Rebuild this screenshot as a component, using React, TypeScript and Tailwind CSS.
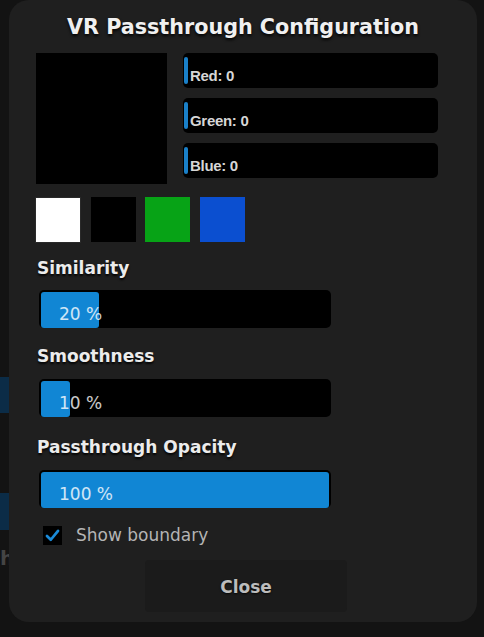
import React from "react";

function ColorBar({ label }: { label: string }) {
  return (
    <div className="flex items-center h-[35px] w-[255px] rounded-[5px] bg-black">
      <div className="ml-[1px] w-[4px] h-[27px] rounded-full bg-[#1a80c8]" />
      <span className="ml-[2px] mt-[10px] font-['Liberation_Sans',sans-serif] font-bold text-[15px] leading-[16px] tracking-[-0.3px] text-[#d6d6d6] [text-shadow:0_1px_1px_rgba(0,0,0,0.8)]">
        {label}
      </span>
    </div>
  );
}

function Slider({ pct, text }: { pct: number; text: string }) {
  return (
    <div className="ml-[30px] w-[292px] h-[38px] rounded-[5px] bg-black p-[2px] grid">
      <div className="col-start-1 row-start-1 h-full">
        <div className="h-full rounded-[3px] bg-[#1186d4]" style={{ width: `${pct}%` }} />
      </div>
      <div className="col-start-1 row-start-1 flex items-center pl-[18px] pt-[10px] text-[17px] text-white/80 font-['DejaVu_Sans',sans-serif]">
        {text}
      </div>
    </div>
  );
}

const labelCls =
  "ml-[28px] h-[20px] leading-[20px] text-[17px] font-bold text-[#ececec] [text-shadow:0_2px_2px_rgba(0,0,0,0.85)]";

export default function App() {
  return (
    <div className="relative w-[484px] h-[637px] overflow-hidden bg-[#131313] font-['DejaVu_Sans',sans-serif]">
      <div className="absolute left-0 top-[377px] w-[12px] h-[36px] bg-[#0b2c47]" />
      <div className="absolute left-0 top-[493px] w-[12px] h-[37px] bg-[#0b2c47]" />
      <div className="absolute left-0 top-[548px] text-[20px] font-bold text-[#444] leading-none">h</div>
      <div className="relative ml-[9px] w-[468px] h-[622px] rounded-[20px] bg-[#1f1f1f] flex flex-col">
        <h1 className="pt-[14px] h-[40px] text-center text-[20.7px] leading-[26px] font-bold text-[#f0f0f0] [text-shadow:0_2px_3px_rgba(0,0,0,0.9)]">
          VR Passthrough Configuration
        </h1>
        <div className="mt-[13px] pl-[27px] flex">
          <div className="w-[131px] h-[131px] bg-black" />
          <div className="ml-[16px] flex flex-col gap-[10px]">
            <ColorBar label="Red: 0" />
            <ColorBar label="Green: 0" />
            <ColorBar label="Blue: 0" />
          </div>
        </div>
        <div className="mt-[13px] pl-[26px] flex gap-[9.5px]">
          <div className="w-[46px] h-[46px] bg-white border-[1.5px] border-[#2a2a2a]" />
          <div className="w-[45px] h-[45px] bg-black" />
          <div className="w-[45px] h-[45px] bg-[#07a316]" />
          <div className="w-[45px] h-[45px] bg-[#0b4fd0]" />
        </div>
        <div className={`mt-[15px] ${labelCls}`}>Similarity</div>
        <div className="mt-[12px]">
          <Slider pct={20} text="20 %" />
        </div>
        <div className={`mt-[18px] ${labelCls}`}>Smoothness</div>
        <div className="mt-[13px]">
          <Slider pct={10} text="10 %" />
        </div>
        <div className={`mt-[20px] ${labelCls}`}>Passthrough Opacity</div>
        <div className="mt-[13px]">
          <Slider pct={100} text="100 %" />
        </div>
        <div className="mt-[17px] ml-[34px] flex items-center h-[20px]">
          <div className="w-[19px] h-[19px] bg-black flex items-center justify-center">
            <svg width="17" height="17" viewBox="0 0 20 20">
              <path d="M3.5 10.5 L8 15 L16.5 4.5" fill="none" stroke="#1a8ad8" strokeWidth="3.2" strokeLinecap="round" strokeLinejoin="round" />
            </svg>
          </div>
          <span className="ml-[14px] text-[17px] leading-[20px] text-[#b4b4b4]">Show boundary</span>
        </div>
        <button className="mt-[15px] ml-[136px] w-[202px] h-[52px] pt-[4px] rounded-[4px] bg-[#1b1b1b] text-[17px] font-bold text-[#bcbcbc] [text-shadow:0_1px_2px_rgba(0,0,0,0.8)]">
          Close
        </button>
      </div>
    </div>
  );
}
